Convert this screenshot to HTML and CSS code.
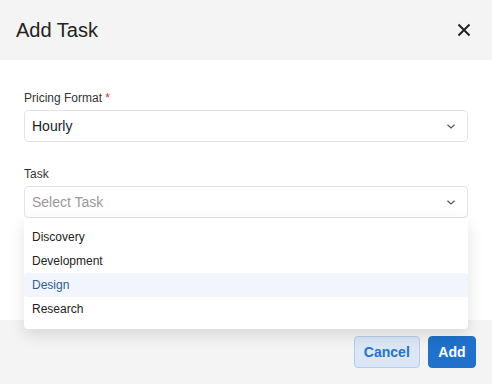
FILE: index.html
```html
<!DOCTYPE html>
<html lang="en">
<head>
    <meta charset="UTF-8">
    <meta name="viewport" content="width=device-width, initial-scale=1.0">
    <title>Add Task</title>
    <link rel="stylesheet" href="styles.css">
</head>
<body>
    <div class="modal">
        <div class="modal-header">
            <h2 class="modal-title">Add Task</h2>
            <button class="close-btn" aria-label="Close">
                <svg width="14" height="14" viewBox="0 0 14 14">
                    <path d="M1.5 1.5 L12.5 12.5 M12.5 1.5 L1.5 12.5" stroke="#222" stroke-width="2" fill="none"/>
                </svg>
            </button>
        </div>
        <div class="modal-body">
            <div class="field">
                <label class="label">Pricing Format <span class="required">*</span></label>
                <div class="select">
                    <span class="select-value">Hourly</span>
                    <svg class="chevron" width="8" height="5" viewBox="0 0 8 5">
                        <path d="M0.5 0.7 L4 4 L7.5 0.7" stroke="#555" stroke-width="1.2" fill="none"/>
                    </svg>
                </div>
            </div>
            <div class="field">
                <label class="label">Task</label>
                <div class="select open">
                    <span class="select-value placeholder">Select Task</span>
                    <svg class="chevron" width="8" height="5" viewBox="0 0 8 5">
                        <path d="M0.5 0.7 L4 4 L7.5 0.7" stroke="#555" stroke-width="1.2" fill="none"/>
                    </svg>
                    <ul class="dropdown">
                        <li class="option">Discovery</li>
                        <li class="option">Development</li>
                        <li class="option active">Design</li>
                        <li class="option">Research</li>
                    </ul>
                </div>
            </div>
        </div>
        <div class="modal-footer">
            <button class="btn btn-secondary">Cancel</button>
            <button class="btn btn-primary">Add</button>
        </div>
    </div>
</body>
</html>
```

FILE: styles.css
```css
body {
    margin: 0;
    font-family: 'Liberation Sans', Arial, sans-serif;
    color: #222;
    background: #fff;
}
.modal {
    width: 492px;
    height: 384px;
    display: flex;
    flex-direction: column;
}
.modal-header {
    height: 60px;
    background: #f4f4f4;
    display: flex;
    align-items: center;
    justify-content: space-between;
    padding: 0 16px;
}
.modal-title {
    margin: 0;
    font-size: 20px;
    font-weight: 400;
    color: #222;
}
.close-btn {
    width: 24px;
    height: 24px;
    padding: 0;
    border: none;
    background: none;
    display: flex;
    align-items: center;
    justify-content: center;
    cursor: pointer;
}
.modal-body {
    flex: 1;
    padding: 30px 24px 0;
    background: #fff;
}
.field {
    margin-bottom: 24px;
}
.label {
    display: block;
    font-size: 12px;
    line-height: 16px;
    margin-bottom: 4px;
    color: #333;
}
.required {
    color: #d93025;
}
.select {
    position: relative;
    height: 32px;
    box-sizing: border-box;
    border: 1px solid #e3e3e3;
    border-radius: 4px;
    display: flex;
    align-items: center;
    justify-content: space-between;
    padding: 0 12px 0 7px;
    font-size: 14px;
}
.select-value {
    color: #222;
}
.placeholder {
    color: #999;
}
.dropdown {
    position: absolute;
    top: 31px;
    left: -1px;
    right: -1px;
    margin: 0;
    padding: 7px 0 8px;
    list-style: none;
    background: #fff;
    border-radius: 0 0 4px 4px;
    box-shadow: 0 6px 16px rgba(0, 0, 0, 0.12);
    z-index: 5;
}
.option {
    height: 24px;
    line-height: 24px;
    padding: 0 8px;
    font-size: 12px;
    color: #222;
    border-radius: 4px;
}
.option.active {
    background: #f2f6fc;
    color: #2d5d93;
}
.modal-footer {
    height: 64px;
    box-sizing: border-box;
    background: #f4f4f4;
    display: flex;
    align-items: center;
    justify-content: flex-end;
    gap: 8px;
    padding: 0 16px;
}
.btn {
    height: 32px;
    padding: 0 9px;
    font-family: inherit;
    font-size: 14px;
    font-weight: 700;
    border-radius: 4px;
    border: 1px solid transparent;
    cursor: pointer;
}
.btn-secondary {
    background: #dbe7f6;
    border-color: #b3cdef;
    color: #2871c5;
}
.btn-primary {
    padding: 0 9.5px;
    background: #1f71cb;
    border-color: #1f71cb;
    color: #fff;
}
```
